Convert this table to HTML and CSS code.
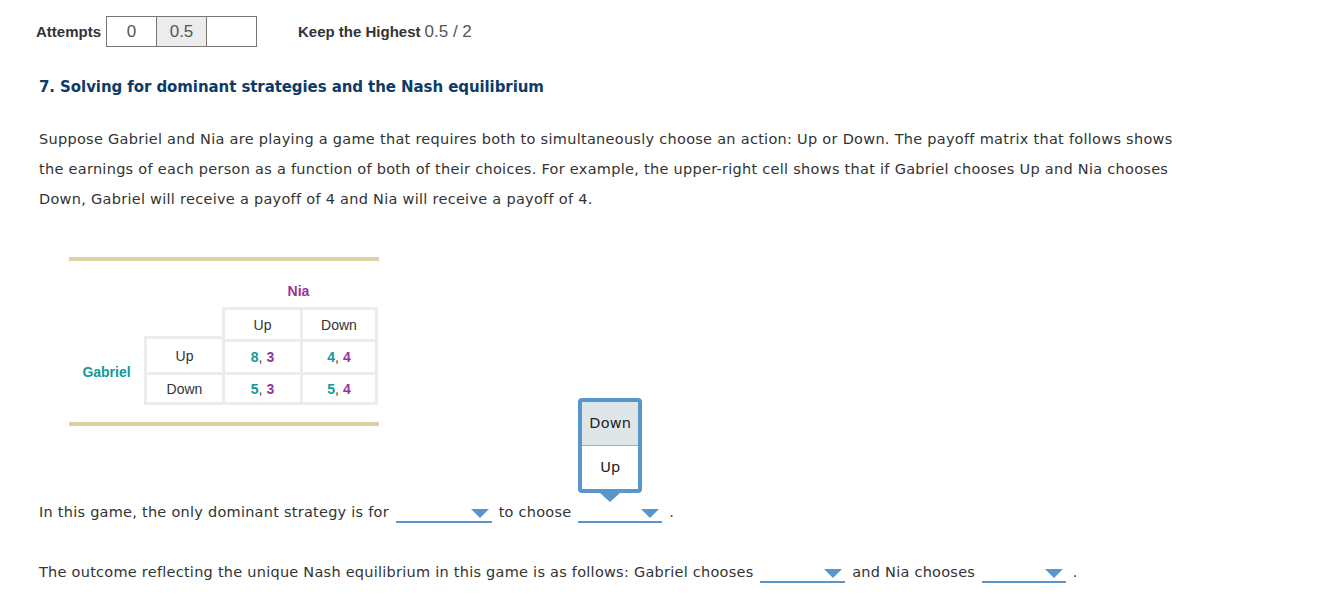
FILE: index.html
```html
<!DOCTYPE html>
<html>
<head>
<meta charset="utf-8">
<link rel="stylesheet" href="styles.css">
</head>
<body>
<div class="page">
  <div class="attempts">
    <span class="att-label">Attempts</span>
    <div class="att-boxes">
      <div class="att-box">0</div>
      <div class="att-box current">0.5</div>
      <div class="att-box"></div>
    </div>
    <span class="keep">Keep the Highest</span>
    <span class="score">0.5 / 2</span>
  </div>

  <h2 class="title">7. Solving for dominant strategies and the Nash equilibrium</h2>

  <p class="intro">Suppose Gabriel and Nia are playing a game that requires both to simultaneously choose an action: Up or Down. The payoff matrix that follows shows the earnings of each person as a function of both of their choices. For example, the upper-right cell shows that if Gabriel chooses Up and Nia chooses Down, Gabriel will receive a payoff of 4 and Nia will receive a payoff of 4.</p>

  <div class="matrix">
    <div class="grid">
      <div class="nia">Nia</div>
      <div class="cell hdr c3">Up</div>
      <div class="cell hdr c4">Down</div>
      <div class="gabriel">Gabriel</div>
      <div class="cell lab r1">Up</div>
      <div class="cell pay r1 c3"><span><span class="g">8</span>, <span class="n">3</span></span></div>
      <div class="cell pay r1 c4"><span><span class="g">4</span>, <span class="n">4</span></span></div>
      <div class="cell lab r2">Down</div>
      <div class="cell pay r2 c3"><span><span class="g">5</span>, <span class="n">3</span></span></div>
      <div class="cell pay r2 c4"><span><span class="g">5</span>, <span class="n">4</span></span></div>
    </div>
  </div>

  <p class="q q1">In this game, the only dominant strategy is for <span class="blank w96"><span class="caret"></span></span> to choose <span class="blank w84 open"><span class="caret"></span>
      <span class="menu">
        <span class="opt hl">Down</span>
        <span class="opt">Up</span>
      </span>
    </span> .</p>

  <p class="q q2">The outcome reflecting the unique Nash equilibrium in this game is as follows: Gabriel chooses <span class="blank w85"><span class="caret"></span></span> and Nia chooses <span class="blank w84"><span class="caret"></span></span> .</p>
</div>
</body>
</html>
```

FILE: styles.css
```css
html, body {
  margin: 0;
  padding: 0;
  background: #fff;
}
.page {
  padding: 16px 0 0 39px;
  font-family: "DejaVu Sans", Verdana, sans-serif;
  color: #333;
}
.attempts {
  display: flex;
  align-items: center;
  height: 31px;
  margin-left: -3px;
  font-family: "Liberation Sans", Arial, sans-serif;
}
.att-label {
  font-size: 15px;
  font-weight: bold;
  color: #333;
  margin-right: 5px;
}
.att-boxes {
  display: flex;
  border: 1px solid #777;
}
.att-box {
  width: 49px;
  height: 29px;
  line-height: 29px;
  text-align: center;
  font-size: 17px;
  color: #555;
  border-left: 1px solid #777;
}
.att-box:first-child { border-left: none; }
.att-box.current { background: #ececec; }
.keep {
  margin-left: 41px;
  font-size: 15px;
  font-weight: bold;
  color: #333;
}
.score {
  margin-left: 4px;
  font-size: 17px;
  color: #555;
}
.title {
  margin: 30px 0 0 0;
  font-size: 15px;
  letter-spacing: -0.08px;
  font-weight: bold;
  color: #0e3b66;
  line-height: 20px;
}
.intro {
  margin: 27px 0 0 0;
  width: 1160px;
  font-size: 14.5px;
  letter-spacing: 0.28px;
  line-height: 30px;
  color: #333;
}
.matrix {
  margin: 43px 0 0 30px;
  width: 310px;
  border-top: 4px solid #ddd2a6;
  border-bottom: 4px solid #ddd2a6;
  padding: 0 0 20px 0;
  font-family: "Liberation Sans", Arial, sans-serif;
  font-size: 14px;
}
.grid {
  display: grid;
  grid-template-columns: 75px 78px 78px 75px;
  grid-template-rows: 46px 32px 33px 30px;
}
.nia {
  grid-column: 3 / 5;
  grid-row: 1;
  text-align: center;
  color: #993399;
  font-weight: bold;
  line-height: 16px;
  padding-top: 22px;
}
.cell {
  border: 3px solid #ececec;
  margin: 0 -3px -3px 0;
  display: flex;
  align-items: center;
  justify-content: center;
  color: #333;
}
.hdr { grid-row: 2; }
.c3 { grid-column: 3; }
.c4 { grid-column: 4; }
.lab { grid-column: 2; }
.r1 { grid-row: 3; }
.r2 { grid-row: 4; }
.lab.r1 { margin-top: -3px; }
.gabriel {
  grid-column: 1;
  grid-row: 3 / 5;
  display: flex;
  align-items: center;
  justify-content: center;
  margin-bottom: -3px;
  color: #109a9a;
  font-weight: bold;
}
.pay .g { color: #109a9a; font-weight: bold; }
.pay .n { color: #993399; font-weight: bold; }
.q {
  margin: 0;
  font-size: 14.5px;
  letter-spacing: 0.25px;
  line-height: 20px;
  color: #333;
}
.q1 { margin-top: 75px; }
.q2 { margin-top: 38px; }
.blank {
  display: inline-block;
  position: relative;
  height: 20px;
  vertical-align: -6px;
  border-bottom: 2px solid #5896cc;
  margin: 0 2px;
}
.w96 { width: 96px; }
.w84 { width: 84px; }
.w85 { width: 85px; }
.caret {
  position: absolute;
  right: 3px;
  top: 8px;
  width: 0;
  height: 0;
  border-left: 9px solid transparent;
  border-right: 9px solid transparent;
  border-top: 9px solid #5896cc;
}
.menu {
  position: absolute;
  left: 0;
  bottom: 28px;
  width: 56px;
  border: 4px solid #5896cc;
  border-radius: 4px;
  background: #fff;
  display: flex;
  flex-direction: column;
  font-size: 14.5px;
  letter-spacing: 0.2px;
}
.menu::after {
  content: "";
  position: absolute;
  left: 18px;
  bottom: -13px;
  border-left: 10px solid transparent;
  border-right: 10px solid transparent;
  border-top: 9px solid #5896cc;
}
.opt {
  display: block;
  height: 43px;
  line-height: 43px;
  text-align: center;
  color: #222;
}
.opt.hl {
  background: #dfe6e9;
  border-bottom: 1px solid #8ab5d9;
}
```
